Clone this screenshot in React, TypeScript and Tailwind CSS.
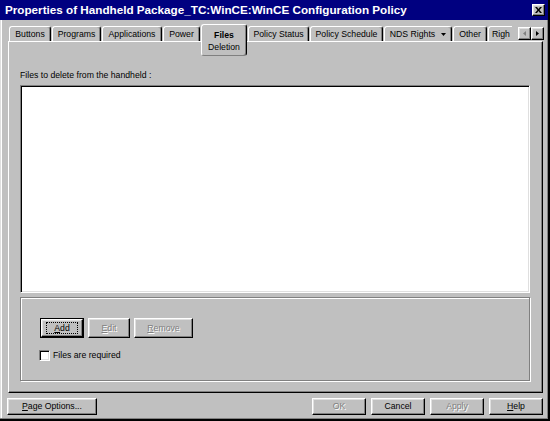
import React from "react";

const raised =
  "border-t border-l border-r border-b border-t-white border-l-white border-r-black border-b-black shadow-[inset_-1px_-1px_0_#808080,inset_1px_1px_0_#dfdfdf]";
const sunken =
  "border-t border-l border-r border-b border-t-[#808080] border-l-[#808080] border-r-white border-b-white shadow-[inset_1px_1px_0_#000,inset_-1px_-1px_0_#dfdfdf]";
const tabCls =
  "h-[15px] mt-[2px] shrink-0 flex items-center justify-center overflow-hidden whitespace-nowrap border-t border-l border-r border-t-white border-l-white border-r-black shadow-[inset_-1px_0_0_#808080] rounded-t-[3px]";
const disabledText = "text-[#808080] [text-shadow:1px_1px_0_#fff]";

function Tab({ w, children }: { w: string; children: React.ReactNode }) {
  return <div className={`${tabCls} ${w}`}>{children}</div>;
}

export default function App() {
  return (
    <div className="w-[550px] h-[421px] bg-[#c0c0c0] overflow-hidden flex flex-col border-r-2 border-b-2 border-r-black border-b-black shadow-[inset_-1px_-1px_0_#808080,inset_1px_0_0_#dfdfdf,inset_2px_0_0_#fff] font-['Liberation_Sans',Arial,sans-serif] text-[8.7px] text-black leading-none select-none">
      {/* Title bar */}
      <div className="h-[20px] bg-[#000080] flex items-center justify-between pl-[5px] pr-[3px]">
        <span className="text-white font-bold text-[11.7px] leading-none">
          Properties of Handheld Package_TC:WinCE:WinCE Configuration Policy
        </span>
        <div className={`w-[13px] h-[12px] bg-[#c0c0c0] flex items-center justify-center ${raised}`}>
          <svg width="7" height="6" viewBox="0 0 7 6">
            <path d="M0 0h2l1.5 2 1.5-2h2L4.5 3 7 6H5L3.5 4 2 6H0l2.5-3z" fill="#000" />
          </svg>
        </div>
      </div>

      {/* Tabs row */}
      <div className="mt-[4px] pl-[9px] flex items-start gap-[1px] h-[17px] relative z-10">
        <Tab w="w-[42px]">Buttons</Tab>
        <Tab w="w-[49px]">Programs</Tab>
        <Tab w="w-[60px]">Applications</Tab>
        <Tab w="w-[37px]">Power</Tab>
        <div className="w-[46px] h-[32px] shrink-0 bg-[#c0c0c0] flex flex-col items-center pt-[5px] gap-[2px] border-t border-l border-r border-b border-t-white border-l-white border-r-black border-b-[#808080] shadow-[inset_-1px_0_0_#808080] rounded-[3px]">
          <span className="font-bold leading-[10px]">Files</span>
          <span className="leading-[10px]">Deletion</span>
        </div>
        <Tab w="w-[61px]">Policy Status</Tab>
        <Tab w="w-[73px]">Policy Schedule</Tab>
        <Tab w="w-[68px]">
          <span>NDS Rights</span>
          <svg width="5" height="3" viewBox="0 0 5 3" className="ml-[6px]">
            <path d="M0 0h5L2.5 3z" fill="#000" />
          </svg>
        </Tab>
        <Tab w="w-[34px]">Other</Tab>
        <div className="h-[15px] mt-[2px] w-[24px] shrink-0 flex items-center pl-[3px] whitespace-nowrap border-t border-l border-t-white border-l-white rounded-tl-[3px]">
          Righ
        </div>
        <div className="ml-[5px] mt-[3px] flex">
          <div className={`w-[13px] h-[13px] flex items-center justify-center ${raised}`}>
            <svg width="3" height="5" viewBox="0 0 3 5">
              <path d="M3 0v5L0 2.5z" fill="#808080" />
            </svg>
          </div>
          <div className={`w-[13px] h-[13px] flex items-center justify-center ${raised}`}>
            <svg width="3" height="5" viewBox="0 0 3 5">
              <path d="M0 0v5L3 2.5z" fill="#000" />
            </svg>
          </div>
        </div>
      </div>

      {/* Panel */}
      <div className="ml-[8px] w-[535px] h-[352px] flex flex-col border-t border-l border-r border-b border-t-white border-l-white border-r-black border-b-black shadow-[inset_-1px_-1px_0_#808080] pl-[11px]">
        <div className="mt-[28px] h-[11px] leading-[11px]">Files to delete from the handheld :</div>
        <div className={`mt-[4px] w-[510px] h-[208px] bg-white ${sunken}`} />
        <div className="mt-[4px] w-[510px] h-[84px] border border-[#808080] shadow-[1px_1px_0_#fff,inset_1px_1px_0_#fff] pl-[19px] pt-[20px] flex flex-col">
          <div className="flex gap-[4px]">
            <div className="w-[44px] h-[20px] border border-black">
              <div className={`w-full h-full flex items-center justify-center ${raised}`}>
                <div className="border border-dotted border-black px-[7px] h-[12px] flex items-center">
                  <span>
                    <u>A</u>dd
                  </span>
                </div>
              </div>
            </div>
            <div className={`w-[42px] h-[20px] flex items-center justify-center ${raised} ${disabledText}`}>
              <span>
                <u>E</u>dit
              </span>
            </div>
            <div className={`w-[59px] h-[20px] flex items-center justify-center ${raised} ${disabledText}`}>
              <span>
                <u>R</u>emove
              </span>
            </div>
          </div>
          <div className="mt-[12px] -ml-[1px] flex items-center gap-[3px]">
            <div className={`w-[11px] h-[11px] bg-white ${sunken}`} />
            <span>Files are required</span>
          </div>
        </div>
      </div>

      {/* Bottom buttons */}
      <div className="mt-[5px] pl-[7px] pr-[5px] flex items-center">
        <div className={`w-[90px] h-[17px] flex items-center justify-center ${raised}`}>
          <span>
            <u>P</u>age Options...
          </span>
        </div>
        <div className="ml-auto flex gap-[5px]">
          <div className={`w-[54px] h-[17px] flex items-center justify-center ${raised} ${disabledText}`}>OK</div>
          <div className={`w-[54px] h-[17px] flex items-center justify-center ${raised}`}>Cancel</div>
          <div className={`w-[54px] h-[17px] flex items-center justify-center ${raised} ${disabledText}`}>Apply</div>
          <div className={`w-[54px] h-[17px] flex items-center justify-center ${raised}`}>
            <span>
              <u>H</u>elp
            </span>
          </div>
        </div>
      </div>
    </div>
  );
}
